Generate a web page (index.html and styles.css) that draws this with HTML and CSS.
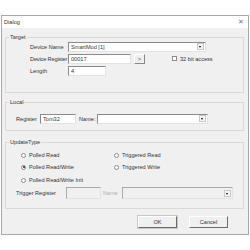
FILE: index.html
```html
<!DOCTYPE html>
<html lang="en">
<head>
    <meta charset="UTF-8">
    <title>Dialog</title>
    <link rel="stylesheet" href="styles.css">
</head>
<body>
    <div class="window">
        <div class="titlebar">
            <span class="title">Dialog</span>
            <span class="close">&#x2715;</span>
        </div>
        <div class="client">
            <div class="group target">
                <span class="group-title">Target</span>
                <div class="row">
                    <span class="lbl">Device Name</span>
                    <div class="combo w-devname"><span>SmartMod [1]</span><i class="drop"></i></div>
                </div>
                <div class="row">
                    <span class="lbl tight">Device Register</span>
                    <div class="edit w-reg">00017</div>
                    <div class="small-btn">&gt;</div>
                    <span class="check"></span>
                    <span>32 bit access</span>
                </div>
                <div class="row">
                    <span class="lbl">Length</span>
                    <div class="edit w-len">4</div>
                </div>
            </div>

            <div class="group local">
                <span class="group-title">Local</span>
                <div class="row">
                    <span class="lbl-reg">Register</span>
                    <div class="edit w-local">Tom32</div>
                    <span class="lbl-name">Name:</span>
                    <div class="combo w-localname"><span></span><i class="drop"></i></div>
                </div>
            </div>

            <div class="group update">
                <span class="group-title">UpdateType</span>
                <div class="radios">
                    <div class="opt"><span class="radio"></span>Polled Read</div>
                    <div class="opt"><span class="radio"></span>Triggered Read</div>
                    <div class="opt"><span class="radio on"></span>Polled Read/Write</div>
                    <div class="opt"><span class="radio"></span>Triggered Write</div>
                    <div class="opt"><span class="radio"></span>Polled Read/Write Init</div>
                    <div></div>
                </div>
                <div class="row trigger">
                    <span class="lbl-trig">Trigger Register</span>
                    <div class="edit off w-trig"></div>
                    <span class="lbl-tname">Name</span>
                    <div class="combo off w-tname"><span></span><i class="drop"></i></div>
                </div>
            </div>

            <div class="buttons">
                <div class="btn default">OK</div>
                <div class="btn">Cancel</div>
            </div>
        </div>
    </div>
</body>
</html>
```

FILE: styles.css
```css
* {
    box-sizing: border-box;
}
body {
    margin: 0;
    background: #fff;
    font-family: "Liberation Sans", Arial, sans-serif;
    font-size: 5.6px;
    color: #333;
}
.window {
    margin: 15px 0 0 1px;
    width: 248px;
    height: 220px;
    border: 1px solid #a8a8a8;
    background: #f0f0f0;
    display: flex;
    flex-direction: column;
}
.titlebar {
    height: 12px;
    background: #fff;
    display: flex;
    align-items: center;
    justify-content: space-between;
    padding: 0 4px 0 2px;
}
.close {
    color: #777;
    font-size: 6.5px;
}
.client {
    flex: 1;
    padding: 9px 3px 0 3px;
}
.group {
    position: relative;
    border: 1px solid #d9d9d9;
    width: 239px;
}
.group-title {
    position: absolute;
    top: -4px;
    left: 3px;
    padding: 0 1px;
    background: #f0f0f0;
    line-height: 7px;
}
.row {
    display: flex;
    align-items: center;
    height: 11px;
    margin-bottom: 1px;
}
.row > * {
    flex-shrink: 0;
    white-space: nowrap;
}

/* Target */
.target {
    height: 56px;
    padding: 3px 0 0 24px;
}
.lbl {
    min-width: 38px;
}
.lbl.tight {
    letter-spacing: -0.15px;
}
.edit, .combo {
    height: 10px;
    background: #fff;
    border: 1px solid;
    border-color: #8a8a8a #e3e3e3 #e3e3e3 #8a8a8a;
    padding-left: 2px;
    line-height: 8px;
}
.combo {
    display: flex;
    justify-content: space-between;
    padding-right: 1px;
}
.drop {
    width: 7px;
    height: 7px;
    border: 1px solid #c8c8c8;
    background: #f4f4f4;
    position: relative;
}
.drop::after {
    content: "";
    position: absolute;
    left: 1px;
    top: 2px;
    border-left: 1.5px solid transparent;
    border-right: 1.5px solid transparent;
    border-top: 2px solid #000;
}
.w-devname { width: 138px; }
.w-reg { width: 63px; }
.w-len { width: 38px; }
.small-btn {
    margin-left: 3px;
    width: 11px;
    height: 10px;
    border: 1px solid;
    border-color: #fff #8a8a8a #8a8a8a #fff;
    background: #f0f0f0;
    text-align: center;
    line-height: 8px;
}
.check {
    margin-left: 27px;
    margin-right: 3px;
    width: 5px;
    height: 5px;
    border: 1px solid #8a8a8a;
    background: #fff;
}

/* Local */
.local {
    margin-top: 9px;
    height: 29px;
    padding: 10px 0 0 10px;
}
.lbl-reg { min-width: 24px; }
.w-local { width: 36px; }
.lbl-name {
    margin-left: 3px;
    min-width: 18px;
    padding-right: 1px;
}
.w-localname { width: 111px; }

/* UpdateType */
.update {
    margin-top: 11px;
    height: 67px;
    padding: 6px 0 0 15px;
}
.radios {
    display: grid;
    grid-template-columns: 93px auto;
    grid-template-rows: 12px 12px 14px;
}
.opt {
    display: flex;
    align-items: center;
    white-space: nowrap;
}
.radio {
    width: 5px;
    height: 5px;
    border-radius: 50%;
    border: 1px solid #8a8a8a;
    background: #fff;
    margin-right: 3px;
    position: relative;
}
.radio.on::after {
    content: "";
    position: absolute;
    left: 0.5px;
    top: 0.5px;
    width: 2px;
    height: 2px;
    border-radius: 50%;
    background: #222;
}
.trigger {
    height: 12px;
    margin-left: -5px;
}
.lbl-trig { min-width: 50px; }
.edit.off, .combo.off {
    background: #f0f0f0;
    height: 12px;
    border-color: #a8a8a8 #e3e3e3 #e3e3e3 #a8a8a8;
}
.w-trig { width: 35px; }
.lbl-tname {
    margin-left: 2px;
    min-width: 19px;
    color: #b0b0b0;
}
.w-tname {
    width: 111px;
    align-items: center;
}

/* buttons */
.buttons {
    display: flex;
    justify-content: flex-end;
    gap: 12px;
    margin-top: 7px;
    padding-right: 17px;
}
.btn {
    width: 39px;
    height: 12px;
    border: 1px solid;
    border-color: #fff #6a6a6a #6a6a6a #fff;
    background: #f0f0f0;
    text-align: center;
    line-height: 10px;
}
.btn.default {
    outline: 1px solid #c8c8c8;
}
```
